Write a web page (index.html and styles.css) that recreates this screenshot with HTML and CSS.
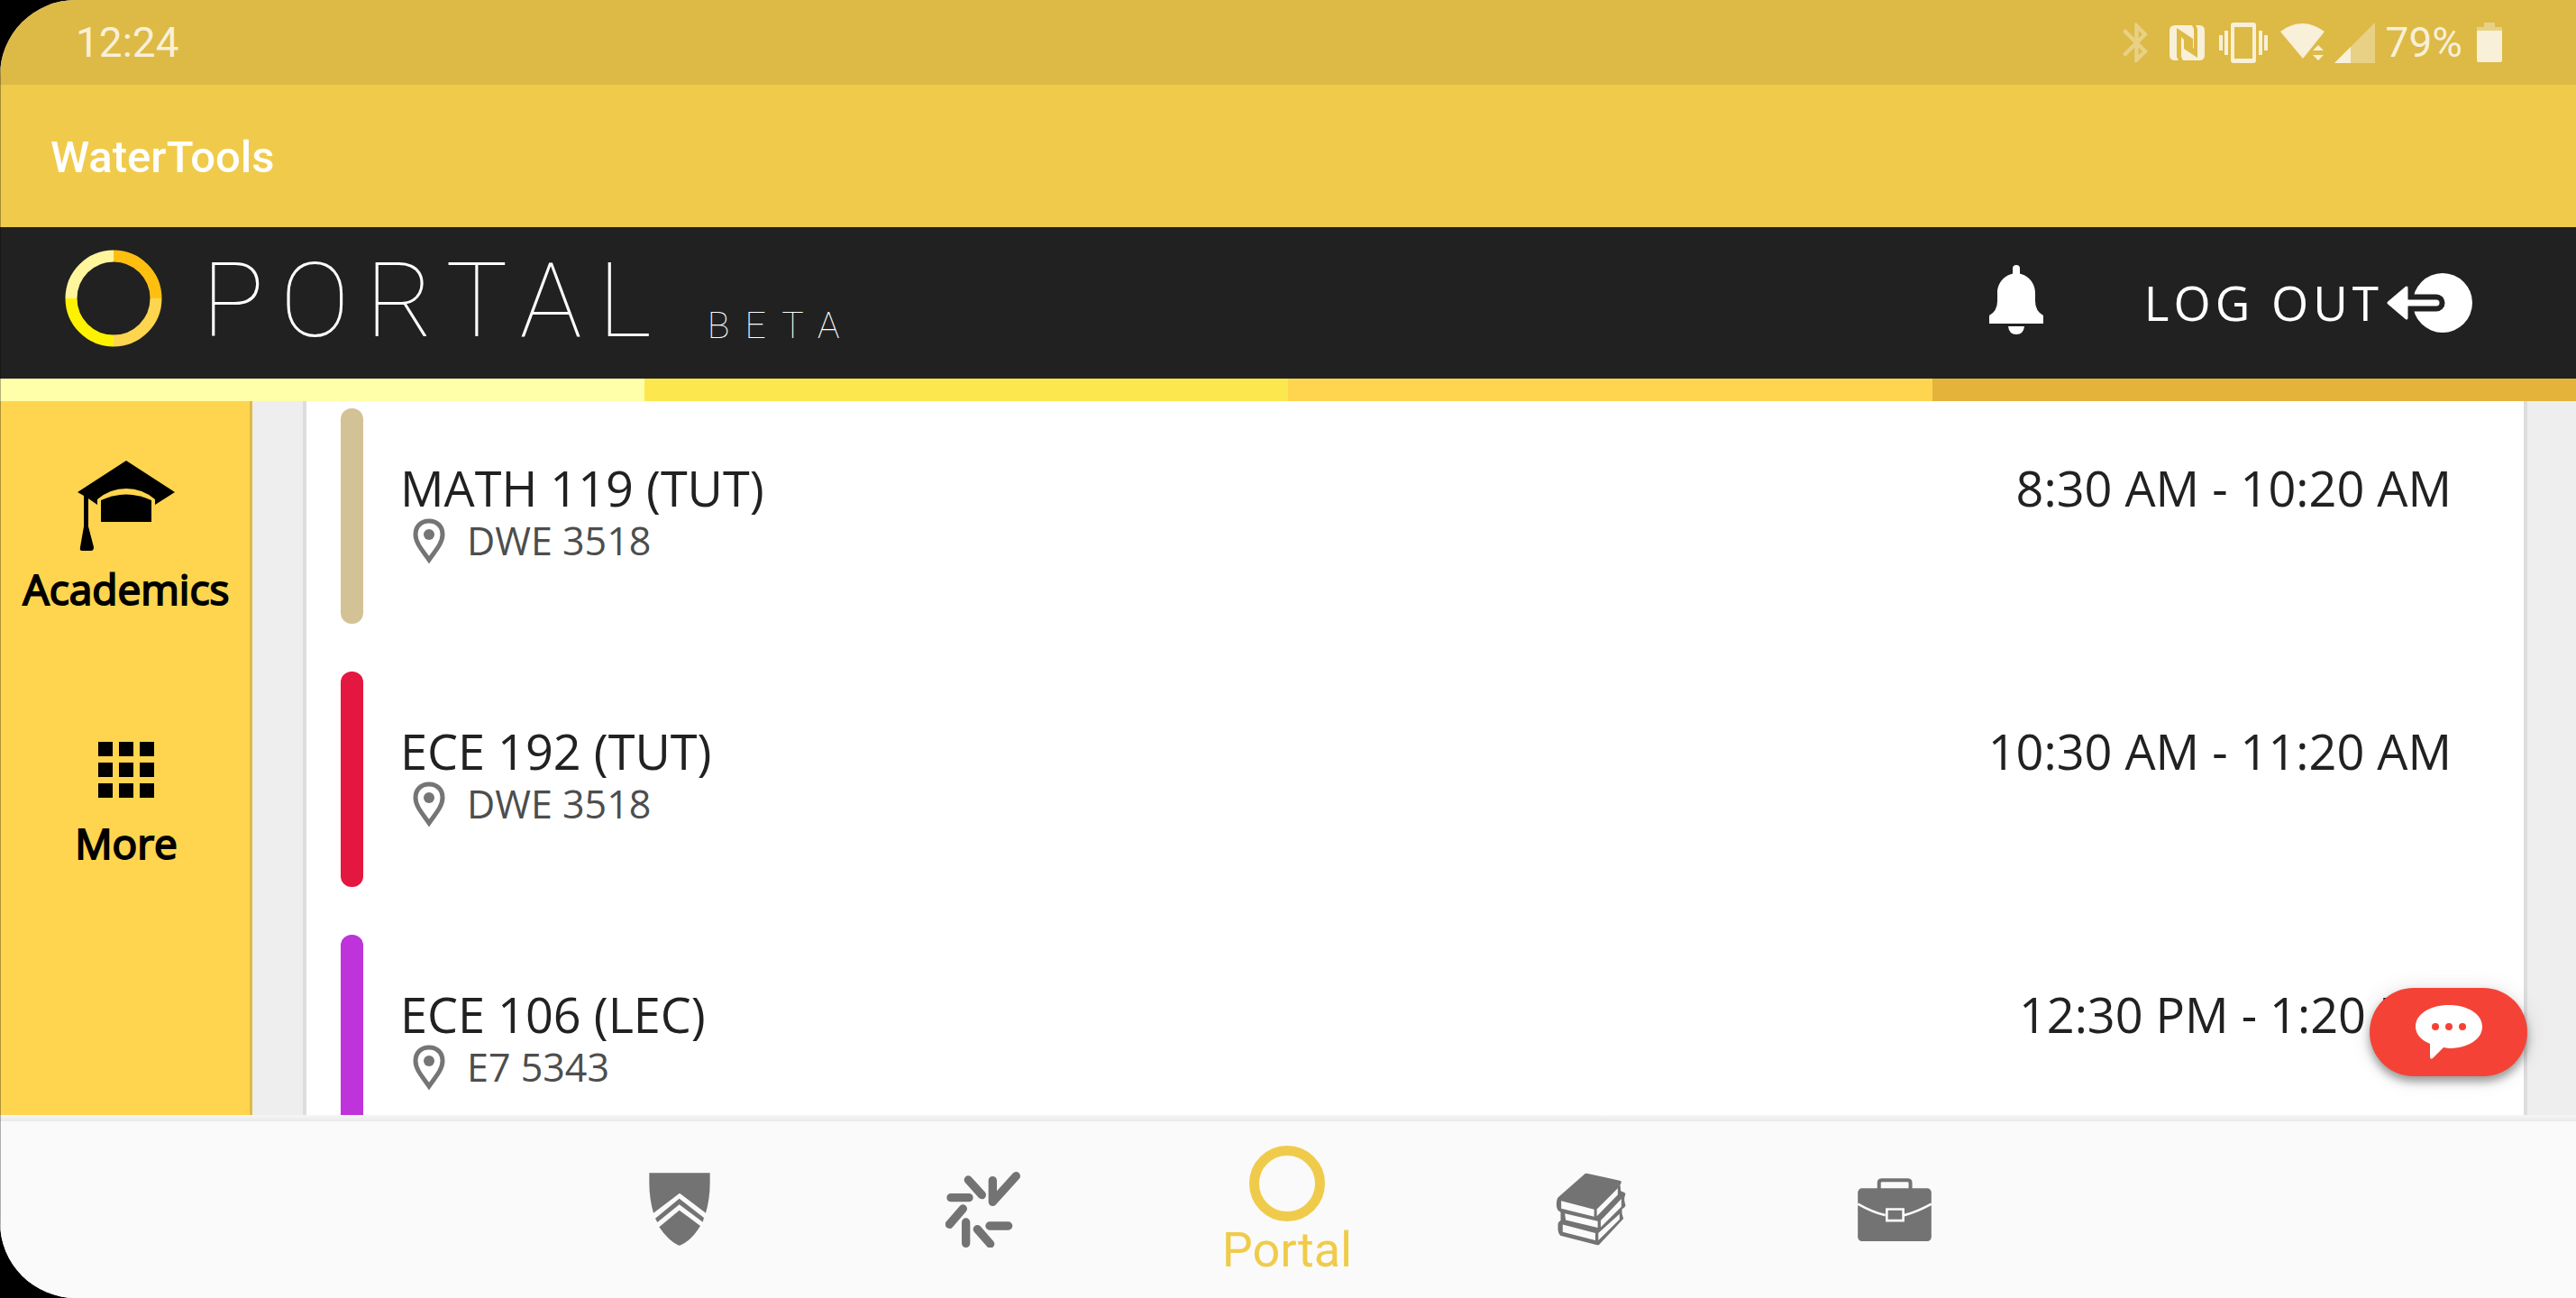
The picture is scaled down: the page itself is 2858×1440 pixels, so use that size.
FILE: index.html
```html
<!DOCTYPE html>
<html lang="en">
<head>
<meta charset="utf-8">
<meta name="viewport" content="width=device-width, initial-scale=1">
<title>WaterTools</title>
<link rel="stylesheet" href="styles.css">
</head>
<body>
<div class="app">
  <div class="status-bar">
    <span class="status-text">12:24</span>
    <div class="status-icons">
      <svg class="bluetooth" width="28" height="45" viewBox="5 2 12.7 20" aria-hidden="true"><path d="M17.71 7.71L12 2h-1v7.59L6.41 5 5 6.41 10.59 12 5 17.59 6.41 19 11 14.41V22h1l5.71-5.71-4.3-4.29zM13 5.83l1.88 1.88L13 9.59zm1.88 10.46L13 18.17v-3.76z"/></svg>
      <svg class="nfc" width="39" height="39" viewBox="0 0 39 39" aria-hidden="true"><path d="M6 0H33Q39 0 39 6V33Q39 39 33 39H6Q0 39 0 33V6Q0 0 6 0Z"/><path class="cut" d="M8 3L26 15V26L13 13V35L15 39H10L8 35ZM31 36L16 26V16L27 26V4L25 0H29L31 4Z"/></svg>
      <svg class="vibrate" width="54" height="45" viewBox="0 0 54 45" aria-hidden="true"><path d="M16 0H38Q41 0 41 3V42Q41 45 38 45H16Q13 45 13 42V3Q13 0 16 0ZM17 5V40H37V5ZM6 9H10V36H6ZM0 14H4V31H0ZM44 9H48V36H44ZM50 14H54V31H50Z"/></svg>
      <svg class="wifi" width="50" height="42" viewBox="0 0 50 42" aria-hidden="true"><path d="M0 9Q24 -9 49 9L25 39ZM36 30L42 24L48 30ZM36 35H48L42 41Z"/></svg>
      <svg class="signal" width="45" height="45" viewBox="0 0 45 45" aria-hidden="true"><path class="dim" d="M45 0V45H0Z"/><path d="M18 27V45H0Z"/></svg>
      <span class="status-text">79%</span>
      <svg class="battery" width="28" height="44" viewBox="0 0 28 44" aria-hidden="true"><path class="dim" d="M8 0H20V5H28V9H0V5H8Z"/><path d="M0 9H28V42Q28 44 26 44H2Q0 44 0 42Z"/></svg>
    </div>
  </div>

  <div class="app-bar"><h1>WaterTools</h1></div>

  <header class="portal-header">
    <a class="brand" href="#">
      <svg class="brand-ring" width="108" height="108" viewBox="0 0 108 108" fill="none" stroke-width="13" aria-hidden="true"><path stroke="#ffbf10" d="M54 7A47 47 0 0 1 101 54"/><path stroke="#ffd54f" d="M101 54A47 47 0 0 1 54 101"/><path stroke="#fff200" d="M54 101A47 47 0 0 1 7 54"/><path stroke="#fff59d" d="M7 54A47 47 0 0 1 54 7"/></svg>
      <span class="brand-name">PORTAL</span>
      <span class="brand-tag">BETA</span>
    </a>
    <div class="header-actions">
      <button class="bell" aria-label="Notifications">
        <svg width="60" height="77" viewBox="0 0 60 77" fill="#fff"><rect x="26" width="8" height="16" rx="4"/><path d="M30 9C17 10 9 20 9 31V40Q9 51 0 56V65H60V56Q51 51 51 40V31C51 20 43 10 30 9ZM21 68H39Q38 77 30 77Q22 77 21 68Z"/></svg>
      </button>
      <button class="logout">LOG OUT
        <svg width="95" height="68" viewBox="0 0 95 68" aria-hidden="true"><ellipse cx="62" cy="34" rx="33" ry="33" fill="#fff"/><path d="M20 34H55" stroke="#212121" stroke-width="19" stroke-linecap="round"/><path d="M22 34H55" stroke="#fff" stroke-width="7" stroke-linecap="round"/><path d="M2 34L22 17V51Z" fill="#fff" stroke="#fff" stroke-width="3" stroke-linejoin="round"/></svg>
      </button>
    </div>
  </header>
  <div class="stripes"><span></span><span></span><span></span><span></span></div>

  <div class="content">
    <nav class="sidebar">
      <a href="#">
        <svg width="108" height="100" viewBox="0 0 108 100" aria-hidden="true"><path d="M54 0L108 35L86 49V43Q72 31 54 31Q36 31 22 43V49L12 42V73L18 96Q18 100 15 100H5Q2 100 3 96L7 73V39L0 35Z"/><path d="M26 44Q54 31 82 44V68H26Z"/></svg>
        Academics
      </a>
      <a href="#">
        <svg width="108" height="100" viewBox="0 0 108 100" aria-hidden="true"><path d="M23 30h16v16H23zM46 30h16v16H46zM69 30h16v16H69zM23 53h16v16H23zM46 53h16v16H46zM69 53h16v16H69zM23 76h16v16H23zM46 76h16v16H46zM69 76h16v16H69z"/></svg>
        More
      </a>
    </nav>
    <main class="schedule">
      <ul class="events">
        <li class="event tan">
          <div class="event-info">
            <h2>MATH 119 (TUT)</h2>
            <p><svg class="pin" width="36" height="50" viewBox="0 0 36 50" aria-hidden="true"><path d="M18 3C9 3 3 9 3 18C3 28 12 37 18 46C24 37 33 28 33 18C33 9 27 3 18 3Z"/><circle cx="18" cy="18" r="6"/></svg>DWE 3518</p>
          </div>
          <time>8:30 AM - 10:20 AM</time>
        </li>
        <li class="event red">
          <div class="event-info">
            <h2>ECE 192 (TUT)</h2>
            <p><svg class="pin" width="36" height="50" viewBox="0 0 36 50" aria-hidden="true"><path d="M18 3C9 3 3 9 3 18C3 28 12 37 18 46C24 37 33 28 33 18C33 9 27 3 18 3Z"/><circle cx="18" cy="18" r="6"/></svg>DWE 3518</p>
          </div>
          <time>10:30 AM - 11:20 AM</time>
        </li>
        <li class="event purple">
          <div class="event-info">
            <h2>ECE 106 (LEC)</h2>
            <p><svg class="pin" width="36" height="50" viewBox="0 0 36 50" aria-hidden="true"><path d="M18 3C9 3 3 9 3 18C3 28 12 37 18 46C24 37 33 28 33 18C33 9 27 3 18 3Z"/><circle cx="18" cy="18" r="6"/></svg>E7 5343</p>
          </div>
          <time>12:30 PM - 1:20 PM</time>
        </li>
      </ul>
    </main>
    <button class="chat" aria-label="Feedback">
      <svg width="74" height="60" viewBox="0 0 74 60"><path fill="#fff" d="M37 0C58 0 74 10 74 24S58 48 37 48L31 47L19 59Q16 61 16 57V43C6 39 0 32 0 24C0 10 16 0 37 0Z"/><g fill="#f44336"><circle cx="22" cy="24" r="4"/><circle cx="37" cy="24" r="4"/><circle cx="52" cy="24" r="4"/></g></svg>
    </button>
  </div>

  <nav class="tabs">
    <a href="#" aria-label="Waterloo">
      <svg width="68" height="81" viewBox="120 155 204 243"><path d="M121 156H323V190Q323 240 309 289L222 223L135 289Q121 240 121 190ZM141 307L221 241L303 305L299 319L221 261L148 320ZM154 336L221 280L291 332Q262 380 226 396Q221 398 216 396Q184 380 154 336Z"/></svg>
    </a>
    <a href="#" aria-label="Learn">
      <svg width="84" height="84" viewBox="1107 150 252 252"><path class="spokes" d="M1125 236H1185M1183 177L1228 227M1264 179V250L1342 164M1165 273L1120 325M1175 318V388M1213 341L1256 390M1254 330H1316"/></svg>
    </a>
    <a class="active" href="#" aria-current="page">
      <svg width="84" height="84" viewBox="0 0 84 84" aria-hidden="true"><circle class="ring" cx="42" cy="42" r="36.5"/></svg>
      Portal
    </a>
    <a href="#" aria-label="Books">
      <svg width="80" height="81" viewBox="1175 154 234 244"><path fill-rule="evenodd" d="M1273 157Q1276 155 1282 157L1391 181Q1395 184 1393 190L1390 193L1392 215L1404 220Q1409 222 1407 228Q1402 240 1405 252L1408 264L1404 270L1396 276V290L1401 308L1320 394Q1317 397 1310 395L1190 364Q1183 356 1182 345V325Q1184 317 1191 314V286Q1177 280 1177 262Q1177 242 1183 236ZM1193 248L1303 277V301L1193 274ZM1312 276L1382 206V228L1312 299ZM1205 290L1315 316V338L1208 312ZM1325 314L1394 241V268L1325 336ZM1198 327L1307 356V380L1198 352ZM1317 356L1388 292V310L1317 380Z"/></svg>
    </a>
    <a href="#" aria-label="Jobs">
      <svg width="82" height="70" viewBox="183 104 246 211"><rect x="183" y="138" width="246" height="177" rx="14"/><path class="handle" d="M254 140V120Q254 111 264 111H349Q359 111 359 120V140"/><path class="seam" d="M183 190Q230 217 275 228M429 190Q385 215 338 228M280 208H335V246H280Z"/></svg>
    </a>
  </nav>
</div>
</body>
</html>
```
FILE: styles.css
```css
* {
  box-sizing: border-box;
}

body {
  margin: 0;
  background: #000;
  font-family: "Open Sans", "Noto Sans", sans-serif;
  color: #212121;
}

h1,
h2,
p,
ul {
  margin: 0;
  padding: 0;
}

a {
  color: inherit;
  text-decoration: none;
}

button {
  border: 0;
  padding: 0;
  background: none;
  color: inherit;
  font: inherit;
  cursor: pointer;
}

svg {
  display: block;
  flex: none;
}

.app {
  position: relative;
  display: flex;
  flex-direction: column;
  height: 100vh;
  overflow: hidden;
  border-radius: 84px 0 0 84px;
  background: #eee;
}

/* Dark hairline down the screen's left edge */
.app::after {
  content: "";
  position: absolute;
  inset: 0 auto 0 0;
  width: 1px;
  background: rgba(0, 0, 0, 0.3);
}

/* Status bar */
.status-bar {
  display: flex;
  align-items: center;
  justify-content: space-between;
  flex: none;
  height: 94px;
  padding: 0 82px 0 84px;
  background: #ddb946;
  color: #f8f0d8;
  font-family: Roboto, sans-serif;
  font-size: 46px;
  line-height: 54px;
}

.status-icons {
  display: flex;
  align-items: center;
  gap: 14px;
  fill: #f8f0d8;
}

.status-icons .dim,
.bluetooth {
  fill: #e8d185;
}

.bluetooth {
  margin-right: 10px;
}

.nfc {
  margin-right: 2px;
}

.nfc .cut {
  fill: #ddb946;
}

.signal {
  margin: 0 -2px 0 -4px;
}

.battery {
  margin-left: 2px;
}

/* App bar */
.app-bar {
  display: flex;
  align-items: center;
  flex: none;
  height: 158px;
  padding: 4px 56px 0;
  background: #f0cb4b;
  color: #fff;
}

.app-bar h1 {
  font: 500 49px/60px Roboto, sans-serif;
}

/* Portal header */
.portal-header {
  display: flex;
  align-items: center;
  justify-content: space-between;
  flex: none;
  height: 168px;
  padding: 0 115px 0 72px;
  background: #212121;
  color: #fff;
}

.brand {
  display: flex;
  align-items: center;
  padding-bottom: 4px;
  font-family: Roboto, sans-serif;
  font-weight: 100;
}

.brand-ring {
  margin-bottom: 6px;
}

.brand-name {
  margin-left: 44px;
  font-size: 115px;
  line-height: 136px;
  letter-spacing: 18px;
}

.brand-tag {
  align-self: flex-end;
  margin-left: 44px;
  font-size: 41px;
  line-height: 82px;
  letter-spacing: 17px;
}

.header-actions {
  display: flex;
  align-items: center;
  gap: 112px;
}

.bell {
  padding-bottom: 8px;
}

.logout {
  display: flex;
  align-items: center;
  gap: 4px;
  font-size: 53px;
  line-height: 72px;
  letter-spacing: 5px;
}

.stripes {
  display: grid;
  grid-template-columns: repeat(4, 1fr);
  flex: none;
  height: 25px;
}

.stripes span:nth-child(1) { background: #ffffaa; }
.stripes span:nth-child(2) { background: #fde74e; }
.stripes span:nth-child(3) { background: #ffd54f; }
.stripes span:nth-child(4) { background: #e4b33a; }

/* Content */
.content {
  position: relative;
  display: flex;
  flex: 1;
  min-height: 0;
}

.sidebar {
  display: flex;
  flex-direction: column;
  flex: none;
  gap: 106px;
  width: 280px;
  padding-top: 66px;
  background: #ffd54f;
  box-shadow: inset -3px 0 #dfba45;
  color: #000;
  font-size: 46px;
  line-height: 68px;
  -webkit-text-stroke: 2px #000;
}

.sidebar a {
  display: flex;
  flex-direction: column;
  align-items: center;
  gap: 8px;
}

.schedule {
  flex: 1;
  min-width: 0;
  padding: 0 54px 0 56px;
  overflow-y: auto;
  scrollbar-width: none;
}

.events {
  padding: 8px 80px 0 38px;
  border: solid #ddd;
  border-width: 0 4px;
  background: #fff;
  list-style: none;
}

.event {
  position: relative;
  display: flex;
  justify-content: space-between;
  gap: 40px;
  min-height: 239px;
  margin-bottom: 53px;
  padding: 54px 0 0 66px;
  line-height: 68px;
}

.event::before {
  content: "";
  position: absolute;
  inset: 0 auto 0 0;
  width: 25px;
  border-radius: 12px;
  background: currentColor;
}

.event h2,
.event time {
  color: #212121;
  font-size: 54px;
  font-weight: 400;
}

.event p {
  display: flex;
  align-items: center;
  gap: 24px;
  padding-left: 14px;
  color: #4d4d4d;
  font-size: 43px;
  line-height: 42px;
}

.tan { color: #d4c297; }
.red { color: #e41740; }
.purple { color: #be33da; }

.pin {
  fill: #757575;
}

.pin path {
  fill: none;
  stroke: #757575;
  stroke-width: 5px;
}

.chat {
  position: absolute;
  right: 54px;
  bottom: 43px;
  display: grid;
  place-items: center;
  width: 175px;
  height: 98px;
  border-radius: 49px;
  background: #f44336;
  box-shadow: 0 6px 10px rgba(0, 0, 0, 0.35), 0 2px 24px rgba(0, 0, 0, 0.12);
}

/* Bottom tabs */
.tabs {
  display: flex;
  justify-content: center;
  flex: none;
  height: 203px;
  padding: 6px 2px 0 0;
  background: linear-gradient(#f6f6f6, #e9e9e9 7px, #fafafa 7px);
  color: #737373;
  fill: #737373;
  font: 54px/64px Roboto, sans-serif;
}

.tabs a {
  display: flex;
  flex-direction: column;
  align-items: center;
  justify-content: center;
  width: 337px;
}

.tabs .active {
  padding-top: 6px;
  color: #f0cb4b;
}

.ring {
  fill: none;
  stroke: #f0cb4b;
  stroke-width: 11px;
}

.spokes {
  fill: none;
  stroke: #737373;
  stroke-width: 28px;
  stroke-linecap: round;
  stroke-linejoin: round;
}

.handle {
  fill: none;
  stroke: #737373;
  stroke-width: 12px;
}

.seam {
  fill: none;
  stroke: #fafafa;
  stroke-width: 8px;
}
```
